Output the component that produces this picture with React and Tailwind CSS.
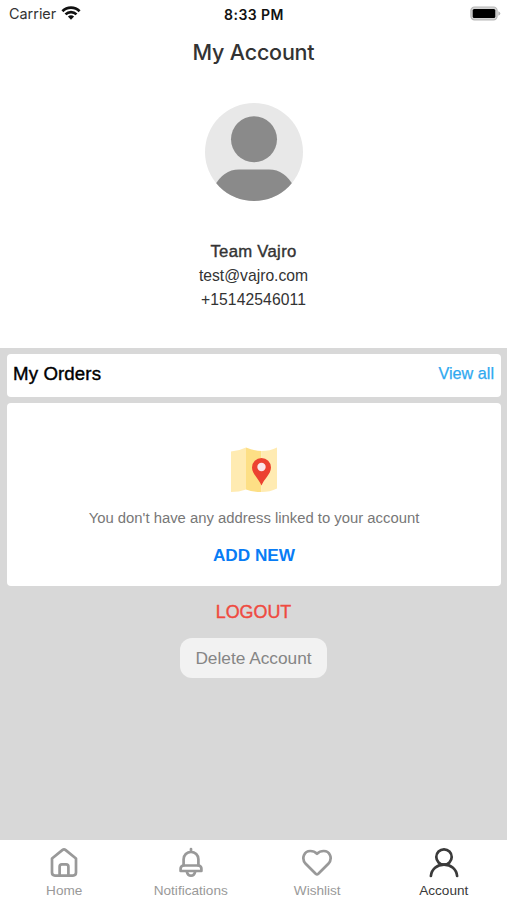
function WifiIcon() {
  return (
    <svg width="20" height="16" viewBox="0 0 20 16" className="relative -top-px ml-[5px]">
      <g fill="none" stroke="#111" strokeWidth="2.7">
        <path d="M1.400 6.200a12.200 12.200 0 0 1 17.200 0" />
        <path d="M4.500 9.400a7.800 7.800 0 0 1 11 0" />
      </g>
      <path d="M6.900 11.600a4.500 4.500 0 0 1 6.200 0L10 14.800z" fill="#111" />
    </svg>
  );
}

function BatteryIcon() {
  return (
    <svg width="31" height="16" viewBox="0 0 31 16">
      <rect x="0.9" y="1" width="26.2" height="12.800" rx="3.600" fill="#d4d4d4" stroke="#b8b8b8" strokeWidth="1.200" />
      <rect x="2.700" y="3" width="22.600" height="9" rx="1.500" fill="#000" />
      <path d="M28.300 5.200q2 .8 2 2.300t-2 2.300z" fill="#b5b5b5" />
    </svg>
  );
}

function Avatar() {
  return (
    <svg width="98" height="98" viewBox="0 0 98 98">
      <clipPath id="avatar-clip">
        <circle cx="49" cy="49" r="49" />
      </clipPath>
      <g clipPath="url(#avatar-clip)">
        <rect width="98" height="98" fill="#e8e8e8" />
        <circle cx="49" cy="36.300" r="23" fill="#8a8a8a" />
        <path d="M9 98V84Q18 66.500 34 66.500H64Q80 66.500 89 84V98z" fill="#8a8a8a" />
      </g>
    </svg>
  );
}

function MapIcon() {
  return (
    <svg width="48" height="46" viewBox="0 0 48 46">
      <path d="M1 4.500Q9 4 16 .5v42Q9 45 1 45z" fill="#ffebb2" />
      <path d="M16 .5q7 3 15.500 3.500v41Q23 45 16 42.500z" fill="#fddf85" />
      <path d="M31.500 4Q40 4 47 .5v41Q40 45 31.500 45z" fill="#ffebb2" />
      <path d="M31.500 38.500C29 32 22 27 22 20.500a9.500 9.500 0 0 1 19 0C41 27 34 32 31.500 38.500z" fill="#ec4130" />
      <circle cx="31.500" cy="20" r="4.200" fill="#fbe6ea" />
    </svg>
  );
}

const stroke = {
  fill: "none",
  stroke: "currentColor",
  strokeWidth: 2.7,
  strokeLinecap: "round",
  strokeLinejoin: "round",
};

function HomeIcon() {
  return (
    <svg width="32" height="32" viewBox="0 0 32 32" {...stroke}>
      <path d="M4 11.500 14.300 3.100q1.700-1.300 3.400 0L28 11.500V25.600q0 3-3 3H7q-3 0-3-3z" />
      <path d="M11.600 28.600v-8.900q0-2.300 2.300-2.300h4.200q2.300 0 2.300 2.300v8.900" />
    </svg>
  );
}

function BellIcon() {
  return (
    <svg width="32" height="32" viewBox="0 0 32 32" {...stroke}>
      <path d="M16 2v2.500M8.600 18.500V12.200a7.400 7.400 0 0 1 14.800 0v6.300" />
      <path d="M8 18.500h16q2.400 1 2.400 3.300V24H5.600v-2.200q0-2.300 2.400-3.300z" />
      <path d="M11.800 24.500q.8 4.200 4.200 4.200t4.200-4.200" />
    </svg>
  );
}

function HeartIcon() {
  return (
    <svg width="32" height="32" viewBox="0 0 32 32" {...stroke}>
      <path d="M14.700 26.800 4.700 16.800C-.3 11 3.500 4 9.300 4c3 0 4.900 1 6.700 2.800C17.800 5 19.700 4 22.700 4c5.800 0 9.600 7 4.600 12.800l-10 10q-1.300 1.200-2.600 0z" />
    </svg>
  );
}

function AccountIcon() {
  return (
    <svg width="32" height="32" viewBox="0 0 32 32" {...stroke}>
      <circle cx="16" cy="10" r="7.700" />
      <path d="M2.900 29C3.500 22 9 17.700 16 17.700S28.500 22 29.100 29" />
    </svg>
  );
}

const tabs = [
  { label: "Home", icon: HomeIcon },
  { label: "Notifications", icon: BellIcon },
  { label: "Wishlist", icon: HeartIcon },
  { label: "Account", icon: AccountIcon, active: true },
];

export default function App() {
  return (
    <div className="flex h-[900px] w-full flex-col bg-[#d8d8d8] font-['Liberation_Sans',Arial,sans-serif]">
      <header className="flex h-[348px] shrink-0 flex-col items-center bg-white">
        <div className="grid h-7 w-full grid-cols-3 items-center pl-[9px] pr-1.5 font-['Inter',sans-serif]">
          <div className="flex items-center text-[14.4px] text-[#333]">
            Carrier
            <WifiIcon />
          </div>
          <div className="-ml-0.5 text-center text-[14px] font-semibold tracking-[0.45px] text-[#111]">8:33 PM</div>
          <div className="flex justify-end">
            <BatteryIcon />
          </div>
        </div>

        <h1 className="mt-2 h-8 font-['Inter',sans-serif] text-[21.5px] leading-8 font-medium tracking-[-0.2px] text-[#333]">
          My Account
        </h1>
        <div className="mt-[35px] h-[98px]">
          <Avatar />
        </div>

        <div className="mt-[38px] text-center text-[#333]">
          <p className="text-[16.7px] leading-[26px] tracking-[0.3px] [-webkit-text-stroke:0.4px_#333]">Team Vajro</p>
          <p className="text-[15.7px] leading-[22px]">test@vajro.com</p>
          <p className="text-[15.7px] leading-[26px] tracking-[0.1px]">+15142546011</p>
        </div>
      </header>

      <main className="flex flex-1 flex-col items-center pl-[7px] pr-1.5 pt-1.5">
        <section className="flex h-[43px] w-full items-center justify-between rounded-[4px] bg-white pr-[7px] pb-[3px] pl-1.5">
          <h2 className="text-[18.7px] tracking-[0.1px] text-black [-webkit-text-stroke:0.4px_#000]">My Orders</h2>
          <button className="pb-0.5 text-[16.2px] text-[#2fa9f0] [-webkit-text-stroke:0.25px_#2fa9f0]">View all</button>
        </section>

        <section className="mt-1.5 flex h-[183px] w-full flex-col items-center rounded-[4px] bg-white pt-11">
          <MapIcon />
          <p className="mt-[13px] text-[14.85px] leading-6 text-[#777]">
            You don't have any address linked to your account
          </p>
          <button className="mt-[13px] text-[17.2px] leading-6 font-bold text-[#087cf5]">ADD NEW</button>
        </section>

        <button className="mt-[14px] mr-px text-[17.9px] leading-6 text-[#ef4a40] [-webkit-text-stroke:0.4px_#ef4a40]">
          LOGOUT
        </button>
        <button className="mt-[14px] mr-px h-10 w-[147px] rounded-[12px] bg-[#f2f2f2] pt-0.5 text-[17.3px] text-[#858585]">
          Delete Account
        </button>
      </main>

      <nav className="grid h-[60px] shrink-0 grid-cols-4 bg-white pl-px">
        {tabs.map(({ label, icon: Icon, active }) => (
          <button
            key={label}
            className={`flex flex-col items-center pt-[7px] text-[13.6px] ${active ? "text-[#3a3a3a]" : "text-[#999]"}`}
          >
            <Icon />
            <span className="mt-1 leading-4">{label}</span>
          </button>
        ))}
      </nav>
    </div>
  );
}
